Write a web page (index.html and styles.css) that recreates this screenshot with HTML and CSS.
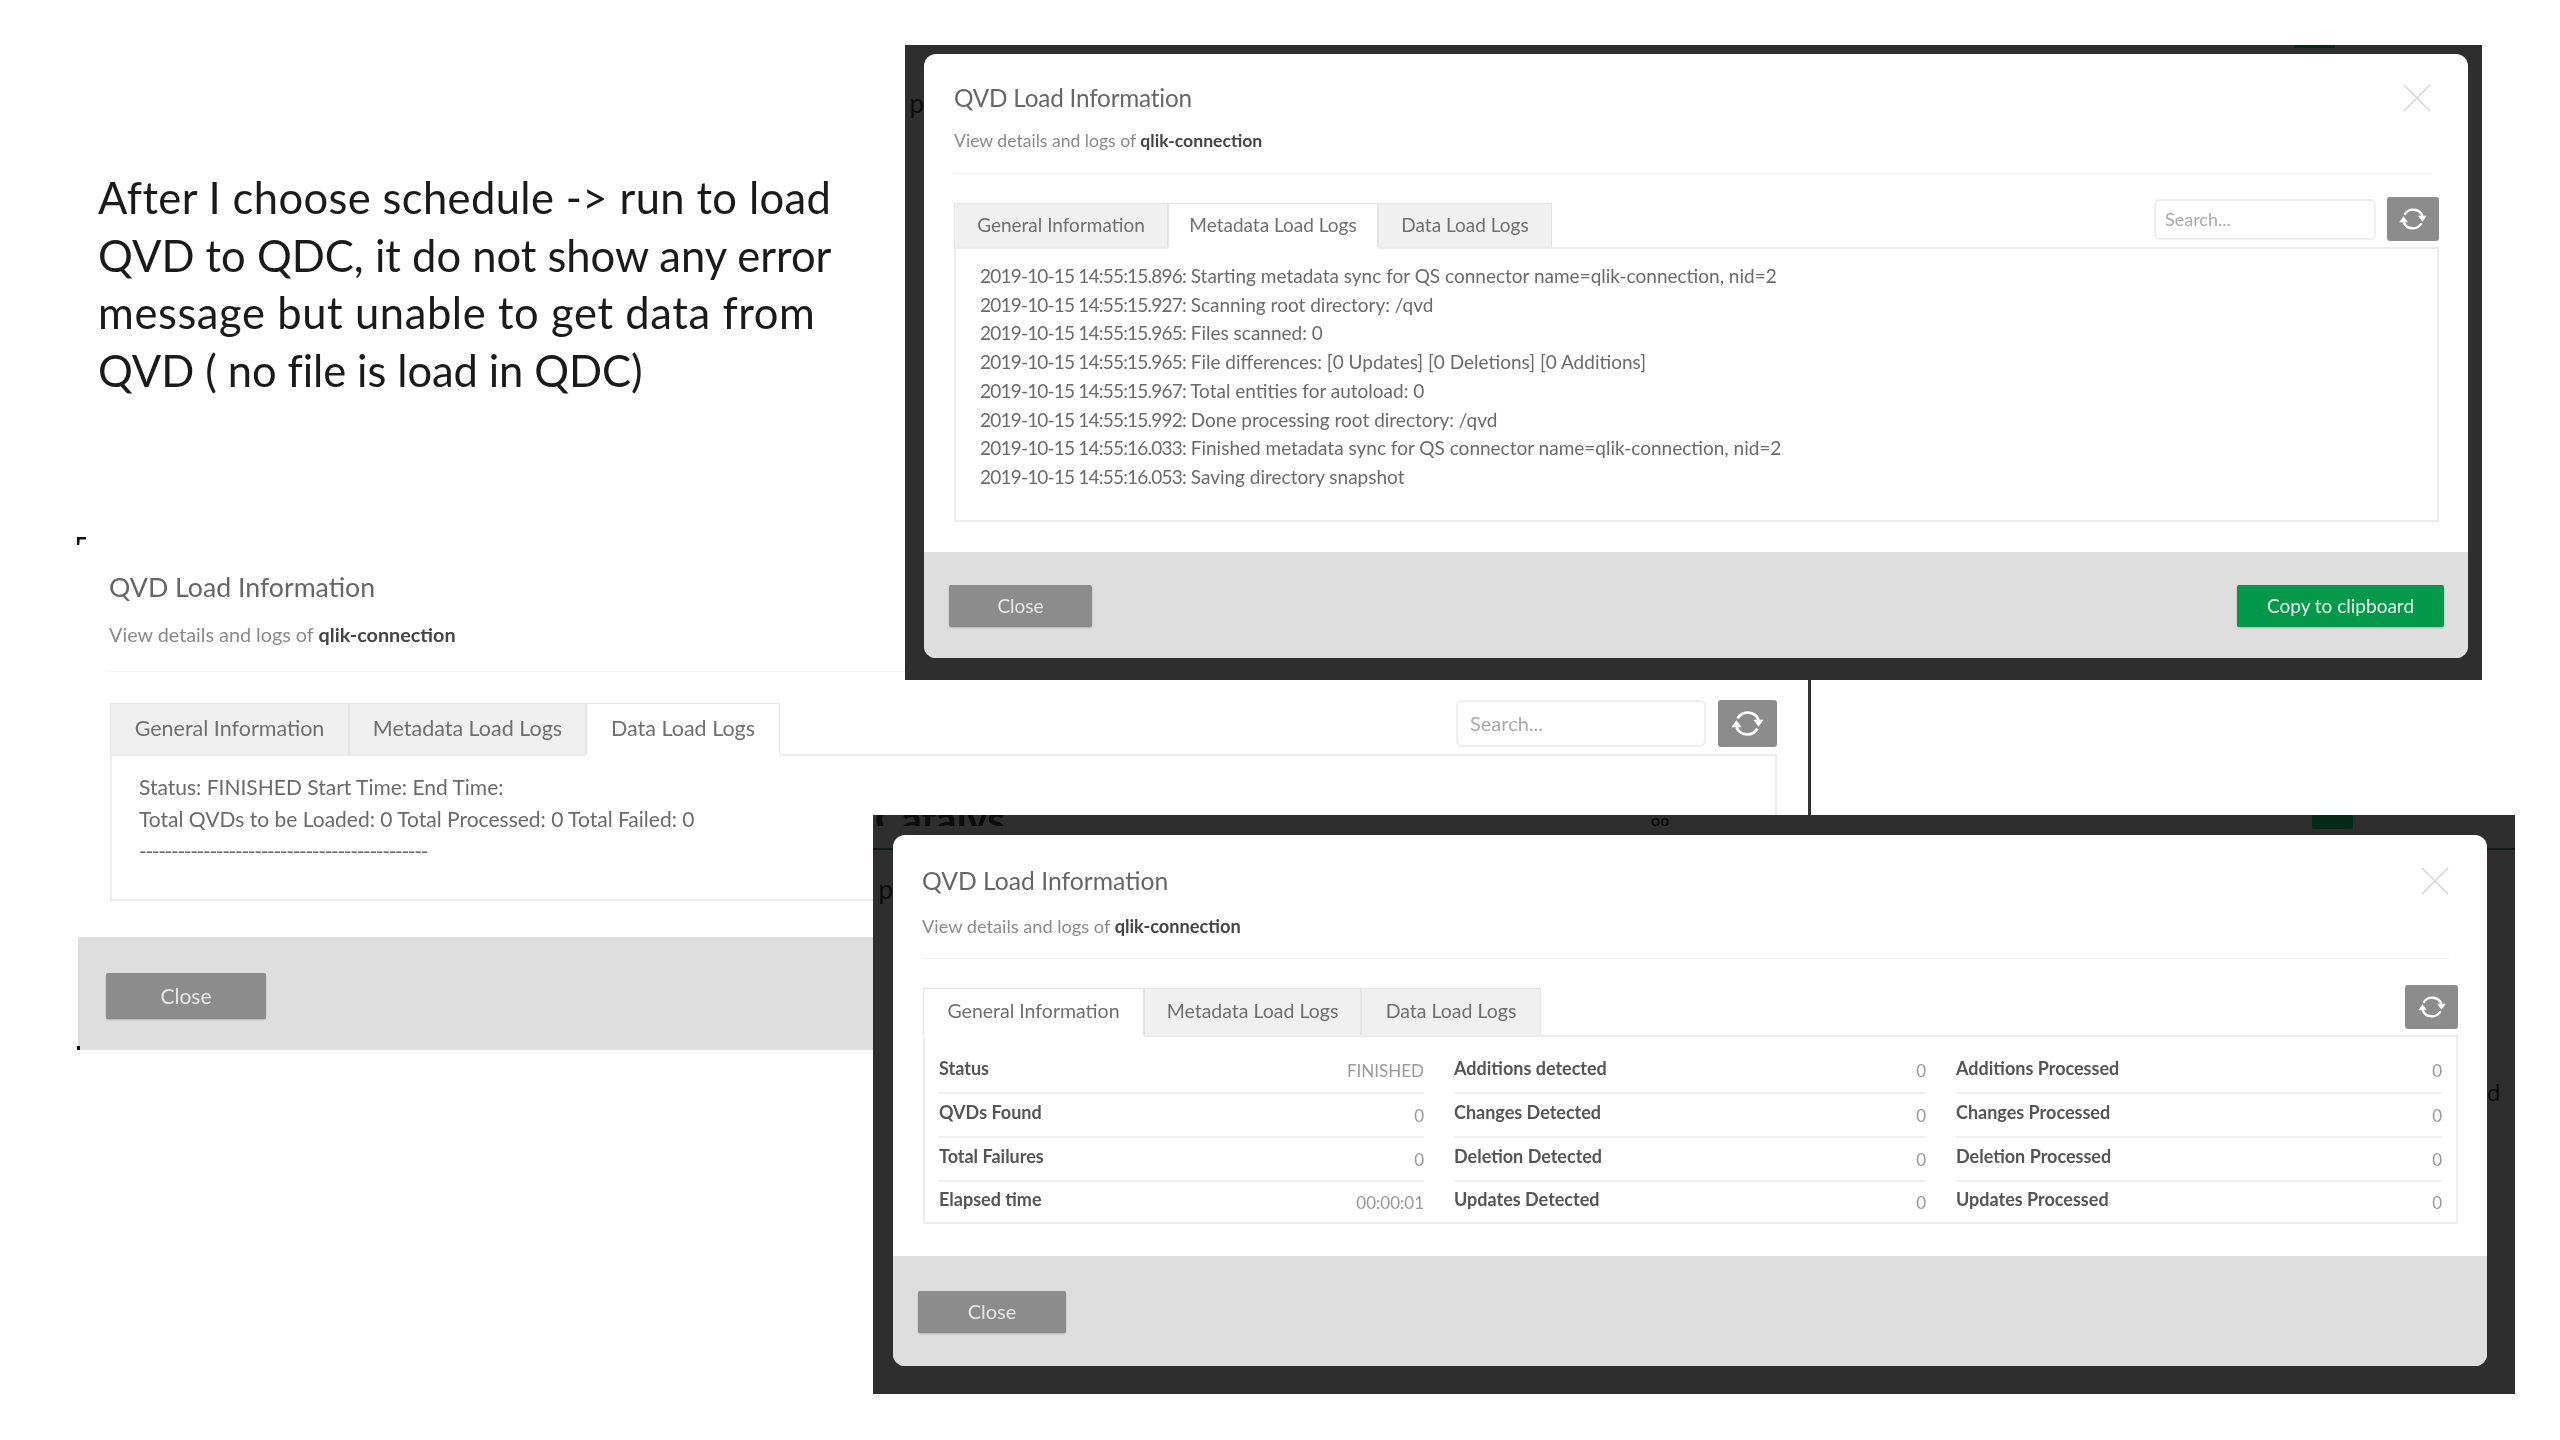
FILE: index.html
```html
<!DOCTYPE html>
<html lang="en">
<head>
<meta charset="utf-8">
<title>QVD Load Information</title>
<link rel="stylesheet" href="styles.css">
</head>
<body>
<main class="canvas">
  <div class="note">
    <div class="line-1">After I choose schedule -&gt; run to load</div>
    <div>QVD to QDC, it do not show any error</div>
    <div class="line-3">message but unable to get data from</div>
    <div class="line-4">QVD ( no file is load in QDC)</div>
  </div>

  <section class="shot shot-b">
    <span class="mark mark-top"></span>
    <span class="mark mark-bottom"></span>
    <div class="modal">
      <h2 class="title">QVD Load Information</h2>
      <p class="sub">View details and logs of <b>qlik-connection</b></p>
      <div class="rule"></div>
      <div class="bar">
        <div class="tabs">
          <span class="tab">General Information</span>
          <span class="tab">Metadata Load Logs</span>
          <span class="tab active">Data Load Logs</span>
        </div>
        <div class="tools">
          <span class="search">Search...</span>
          <span class="refresh"><svg viewBox="0 0 24 24"><path d="M5.2 8.6A8 8 0 0 1 19.6 9.6M18.8 15.4A8 8 0 0 1 4.4 14.4"/><polygon points="16,9.4 23,9.4 19.6,14.2"/><polygon points="1,14.6 8,14.6 4.4,9.8"/></svg></span>
        </div>
      </div>
      <div class="box">
        <div>Status: FINISHED Start Time: End Time:</div>
        <div>Total QVDs to be Loaded: 0 Total Processed: 0 Total Failed: 0</div>
        <div class="dashes">---------------------------------------------</div>
      </div>
      <div class="foot"><span class="btn">Close</span></div>
    </div>
  </section>

  <section class="shot shot-a">
    <span class="frag frag-a1">p</span>
    <span class="patch patch-a"></span>
    <div class="modal">
      <svg class="x" viewBox="0 0 28 28"><path d="M1 1L27 27M27 1L1 27"/></svg>
      <h2 class="title">QVD Load Information</h2>
      <p class="sub">View details and logs of <b>qlik-connection</b></p>
      <div class="rule"></div>
      <div class="bar">
        <div class="tabs">
          <span class="tab">General Information</span>
          <span class="tab active">Metadata Load Logs</span>
          <span class="tab">Data Load Logs</span>
        </div>
        <div class="tools">
          <span class="search">Search...</span>
          <span class="refresh"><svg viewBox="0 0 24 24"><path d="M5.2 8.6A8 8 0 0 1 19.6 9.6M18.8 15.4A8 8 0 0 1 4.4 14.4"/><polygon points="16,9.4 23,9.4 19.6,14.2"/><polygon points="1,14.6 8,14.6 4.4,9.8"/></svg></span>
        </div>
      </div>
      <div class="box">
        <div><span class="ts">2019-10-15 14:55:15.896:</span> Starting metadata sync for QS connector name=qlik-connection, nid=2</div>
        <div><span class="ts">2019-10-15 14:55:15.927:</span> Scanning root directory: /qvd</div>
        <div><span class="ts">2019-10-15 14:55:15.965:</span> Files scanned: 0</div>
        <div><span class="ts">2019-10-15 14:55:15.965:</span> File differences: [0 Updates] [0 Deletions] [0 Additions]</div>
        <div><span class="ts">2019-10-15 14:55:15.967:</span> Total entities for autoload: 0</div>
        <div><span class="ts">2019-10-15 14:55:15.992:</span> Done processing root directory: /qvd</div>
        <div><span class="ts">2019-10-15 14:55:16.033:</span> Finished metadata sync for QS connector name=qlik-connection, nid=2</div>
        <div><span class="ts">2019-10-15 14:55:16.053:</span> Saving directory snapshot</div>
      </div>
      <div class="foot"><span class="btn">Close</span><span class="btn green">Copy to clipboard</span></div>
    </div>
  </section>

  <section class="shot shot-c">
    <span class="frag frag-c1">Catalyst</span>
    <span class="frag frag-c2">p</span>
    <span class="frag frag-c3">d</span>
    <span class="frag frag-c4">oo</span>
    <span class="patch patch-c"></span>
    <span class="stripe stripe-l"></span>
    <span class="stripe stripe-r"></span>
    <div class="modal">
      <svg class="x" viewBox="0 0 28 28"><path d="M1 1L27 27M27 1L1 27"/></svg>
      <h2 class="title">QVD Load Information</h2>
      <p class="sub">View details and logs of <b>qlik-connection</b></p>
      <div class="rule"></div>
      <div class="bar">
        <div class="tabs">
          <span class="tab active">General Information</span>
          <span class="tab">Metadata Load Logs</span>
          <span class="tab">Data Load Logs</span>
        </div>
        <div class="tools">
          <span class="refresh"><svg viewBox="0 0 24 24"><path d="M5.2 8.6A8 8 0 0 1 19.6 9.6M18.8 15.4A8 8 0 0 1 4.4 14.4"/><polygon points="16,9.4 23,9.4 19.6,14.2"/><polygon points="1,14.6 8,14.6 4.4,9.8"/></svg></span>
        </div>
      </div>
      <div class="box stats">
        <div class="stat"><span class="k">Status</span><span class="v">FINISHED</span></div>
        <div class="stat"><span class="k">Additions detected</span><span class="v">0</span></div>
        <div class="stat"><span class="k">Additions Processed</span><span class="v">0</span></div>
        <div class="stat"><span class="k">QVDs Found</span><span class="v">0</span></div>
        <div class="stat"><span class="k">Changes Detected</span><span class="v">0</span></div>
        <div class="stat"><span class="k">Changes Processed</span><span class="v">0</span></div>
        <div class="stat"><span class="k">Total Failures</span><span class="v">0</span></div>
        <div class="stat"><span class="k">Deletion Detected</span><span class="v">0</span></div>
        <div class="stat"><span class="k">Deletion Processed</span><span class="v">0</span></div>
        <div class="stat"><span class="k">Elapsed time</span><span class="v">00:00:01</span></div>
        <div class="stat"><span class="k">Updates Detected</span><span class="v">0</span></div>
        <div class="stat"><span class="k">Updates Processed</span><span class="v">0</span></div>
      </div>
      <div class="foot"><span class="btn">Close</span></div>
    </div>
  </section>
</main>
</body>
</html>
```
FILE: styles.css
```css
* { box-sizing: border-box; }
html, body { margin: 0; padding: 0; background: #fff; }
.canvas {
  position: relative;
  width: 2560px;
  height: 1440px;
  overflow: hidden;
  background: #fff;
  font-family: "Lato", "Liberation Sans", sans-serif;
}
.note {
  position: absolute;
  left: 98px;
  top: 169px;
  font-size: 43.5px;
  line-height: 57.5px;
  color: #1a1a1a;
  white-space: nowrap;
  filter: blur(.4px);
}
.line-1 { letter-spacing: .38px; }
.line-3 { letter-spacing: .6px; }
.line-4 { letter-spacing: -.1px; }
.shot {
  position: absolute;
  display: flex;
  color: #6a6a6a;
  filter: blur(.7px);
}
.modal {
  position: relative;
  flex: 1;
  display: flex;
  flex-direction: column;
  min-width: 0;
  background: #fff;
  overflow: hidden;
}
.title { margin: 0; font-weight: 400; color: #666; white-space: nowrap; }
.sub { margin: 0; color: #8a8a8a; white-space: nowrap; }
.sub b { color: #444; font-weight: 700; }
.rule { border-top: 1px solid #f1f1f1; }
.bar { display: flex; justify-content: space-between; align-items: flex-start; }
.tabs { display: flex; align-self: flex-end; }
.tab {
  display: flex;
  align-items: center;
  justify-content: center;
  padding-bottom: 3px;
  background: #f0f0f0;
  border: 1px solid #e4e4e4;
  border-bottom: 0;
  white-space: nowrap;
  color: #6f6f6f;
}
.tab.active { position: relative; z-index: 1; background: #fff; box-shadow: 0 2px 0 #fff; }
.tools { display: flex; }
.search {
  display: flex;
  align-items: center;
  padding-bottom: 2px;
  border: 2px solid #eee;
  border-radius: 6px;
  color: #aaa;
}
.refresh {
  display: flex;
  align-items: center;
  justify-content: center;
  background: #8c8c8c;
  border-radius: 3px;
}
.refresh svg { fill: #fff; }
.refresh path { fill: none; stroke: #fff; stroke-width: 1.9; }
.box {
  border: 2px solid #ececec;
  color: #6a6a6a;
  white-space: nowrap;
}
.ts { letter-spacing: -.8px; }
.foot {
  flex: 1;
  display: flex;
  justify-content: space-between;
  align-items: flex-start;
  background: #dedede;
}
.btn {
  display: flex;
  align-items: center;
  justify-content: center;
  padding-bottom: 2px;
  background: #8c8c8c;
  color: #e6e6e6;
  border-radius: 2px;
  box-shadow: 0 1px 2px rgba(0,0,0,.2);
}
.btn.green { background: #03994a; color: #e4f5ea; }
.x {
  position: absolute;
  fill: none;
  stroke: #d6d6d6;
  stroke-width: 1.6;
  width: 28px;
  height: 28px;
}

/* Top-right capture */
.shot-a { left: 905px; top: 45px; width: 1577px; height: 635px; padding: 9px 14px 22px 19px; background: #2e2e2e; }
.shot-a .modal { border-radius: 12px; }
.shot-a .x { left: 1479px; top: 30px; }
.shot-a .title { margin: 29px 0 0 30px; font-size: 24.3px; line-height: 30px; letter-spacing: -.2px; }
.shot-a .sub { margin: 16px 0 0 30px; font-size: 17.6px; line-height: 24px; }
.shot-a .rule { margin: 20px 36px 0 30px; }
.shot-a .bar { margin: 23px 29px 0 30px; height: 50px; }
.shot-a .tab { height: 44px; font-size: 19px; }
.shot-a .tab:nth-child(1) { width: 214px; }
.shot-a .tab:nth-child(2) { width: 210px; }
.shot-a .tab:nth-child(3) { width: 174px; }
.shot-a .tools { gap: 11px; }
.shot-a .search { width: 222px; height: 41px; margin-top: 2px; padding-left: 9px; font-size: 18px; }
.shot-a .refresh { width: 52px; height: 44px; }
.shot-a .refresh svg { width: 30px; height: 30px; }
.shot-a .box { margin: 0 29px 0 30px; height: 275px; padding: 13px 24px; font-size: 19px; line-height: 28.7px; }
.shot-a .foot { margin-top: 30px; padding: 33px 24px 0 25px; }
.shot-a .btn { height: 42px; font-size: 19px; width: 143px; }
.shot-a .btn.green { width: 207px; }

/* Left capture, without backdrop */
.shot-b { left: 78px; top: 537px; width: 1733px; height: 513px; border-right: 3px solid #333; }
.shot-b .title { margin: 34px 0 0 31px; font-size: 26.7px; line-height: 32px; }
.shot-b .sub { margin: 19px 0 0 31px; font-size: 19.8px; line-height: 24px; }
.shot-b .rule { margin: 25px 31px 0 31px; }
.shot-b .bar { margin: 28px 31px 0 32px; height: 54px; }
.shot-b .tab { height: 51px; font-size: 21.5px; }
.shot-b .tab:nth-child(1) { width: 239px; }
.shot-b .tab:nth-child(2) { width: 237px; }
.shot-b .tab:nth-child(3) { width: 194px; }
.shot-b .tools { gap: 12px; }
.shot-b .search { width: 250px; height: 47px; padding-left: 12px; font-size: 20px; }
.shot-b .refresh { width: 59px; height: 47px; }
.shot-b .refresh svg { width: 35px; height: 35px; }
.shot-b .box { margin: 0 31px 0 32px; height: 147px; padding: 15px 27px; font-size: 21px; line-height: 32px; }
.shot-b .dashes { letter-spacing: -1.4px; }
.shot-b .foot { margin-top: 36px; padding: 36px 0 0 28px; }
.shot-b .btn { width: 160px; height: 46px; font-size: 21px; }
.mark { position: absolute; background: #111; z-index: 1; }
.mark-top { left: -1px; top: 0; width: 9px; height: 8px; clip-path: polygon(0 0, 100% 0, 100% 30%, 30% 30%, 25% 100%, 0 100%); }
.mark-bottom { left: -1px; bottom: 0; width: 3px; height: 4px; }

/* Bottom-right capture */
.shot-c { left: 873px; top: 815px; width: 1642px; height: 579px; padding: 20px 28px 28px 20px; background: #2e2e2e; }
.shot-c .modal { border-radius: 12px; }
.shot-c .x { left: 1528px; top: 32px; }
.shot-c .title { margin: 30px 0 0 29px; font-size: 24.7px; line-height: 32px; }
.shot-c .sub { margin: 17px 0 0 29px; font-size: 18.2px; line-height: 24px; }
.shot-c .rule { margin: 20px 37px 0 29px; }
.shot-c .bar { margin: 26px 29px 0 30px; height: 50px; }
.shot-c .tab { height: 47px; font-size: 19.5px; }
.shot-c .tab:nth-child(1) { width: 221px; }
.shot-c .tab:nth-child(2) { width: 217px; }
.shot-c .tab:nth-child(3) { width: 180px; }
.shot-c .refresh { width: 53px; height: 44px; }
.shot-c .refresh svg { width: 30px; height: 30px; }
.shot-c .box { margin: 0 29px 0 30px; height: 189px; }
.shot-c .stats {
  display: grid;
  grid-template-columns: 485px 472px 1fr;
  grid-template-rows: 45px 44px 44px 42px;
  column-gap: 30px;
  padding: 12px 14px 0 14px;
  font-size: 18px;
}
.stat {
  display: flex;
  justify-content: space-between;
  align-items: center;
  border-bottom: 2px solid #efefef;
}
.stat:nth-last-child(-n+3) { border-bottom: 0; padding-bottom: 2px; }
.k { color: #555; font-weight: 700; padding-bottom: 6px; }
.v { color: #999; font-size: 17px; }
.shot-c .foot { margin-top: 32px; padding: 35px 0 0 25px; }
.shot-c .btn { width: 148px; height: 42px; font-size: 20px; }

/* Bits of the page behind the dialogs */
.frag { position: absolute; color: #0c0c0c; overflow: hidden; }
.frag-a1 { left: 0; top: 42px; width: 19px; font-size: 26px; text-align: right; }
.frag-c1 { left: 2px; top: 0; height: 11px; width: 130px; font-size: 40px; line-height: 8px; font-weight: 700; }
.frag-c2 { left: 0; top: 58px; width: 20px; font-size: 26px; text-align: right; }
.frag-c3 { right: 6px; top: 262px; width: 22px; font-size: 24px; }
.frag-c4 { left: 778px; top: 0; font-size: 16px; line-height: 10px; font-weight: 700; height: 11px; }
.patch { position: absolute; background: #032a17; border-radius: 2px; }
.patch-a { left: 1389px; top: 0; width: 41px; height: 3px; }
.patch-c { left: 1439px; top: 0; width: 41px; height: 14px; }
.stripe { position: absolute; top: 33px; height: 2px; background: #0e1a18; }
.stripe-l { left: 0; width: 20px; }
.stripe-r { right: 0; width: 28px; }
```
